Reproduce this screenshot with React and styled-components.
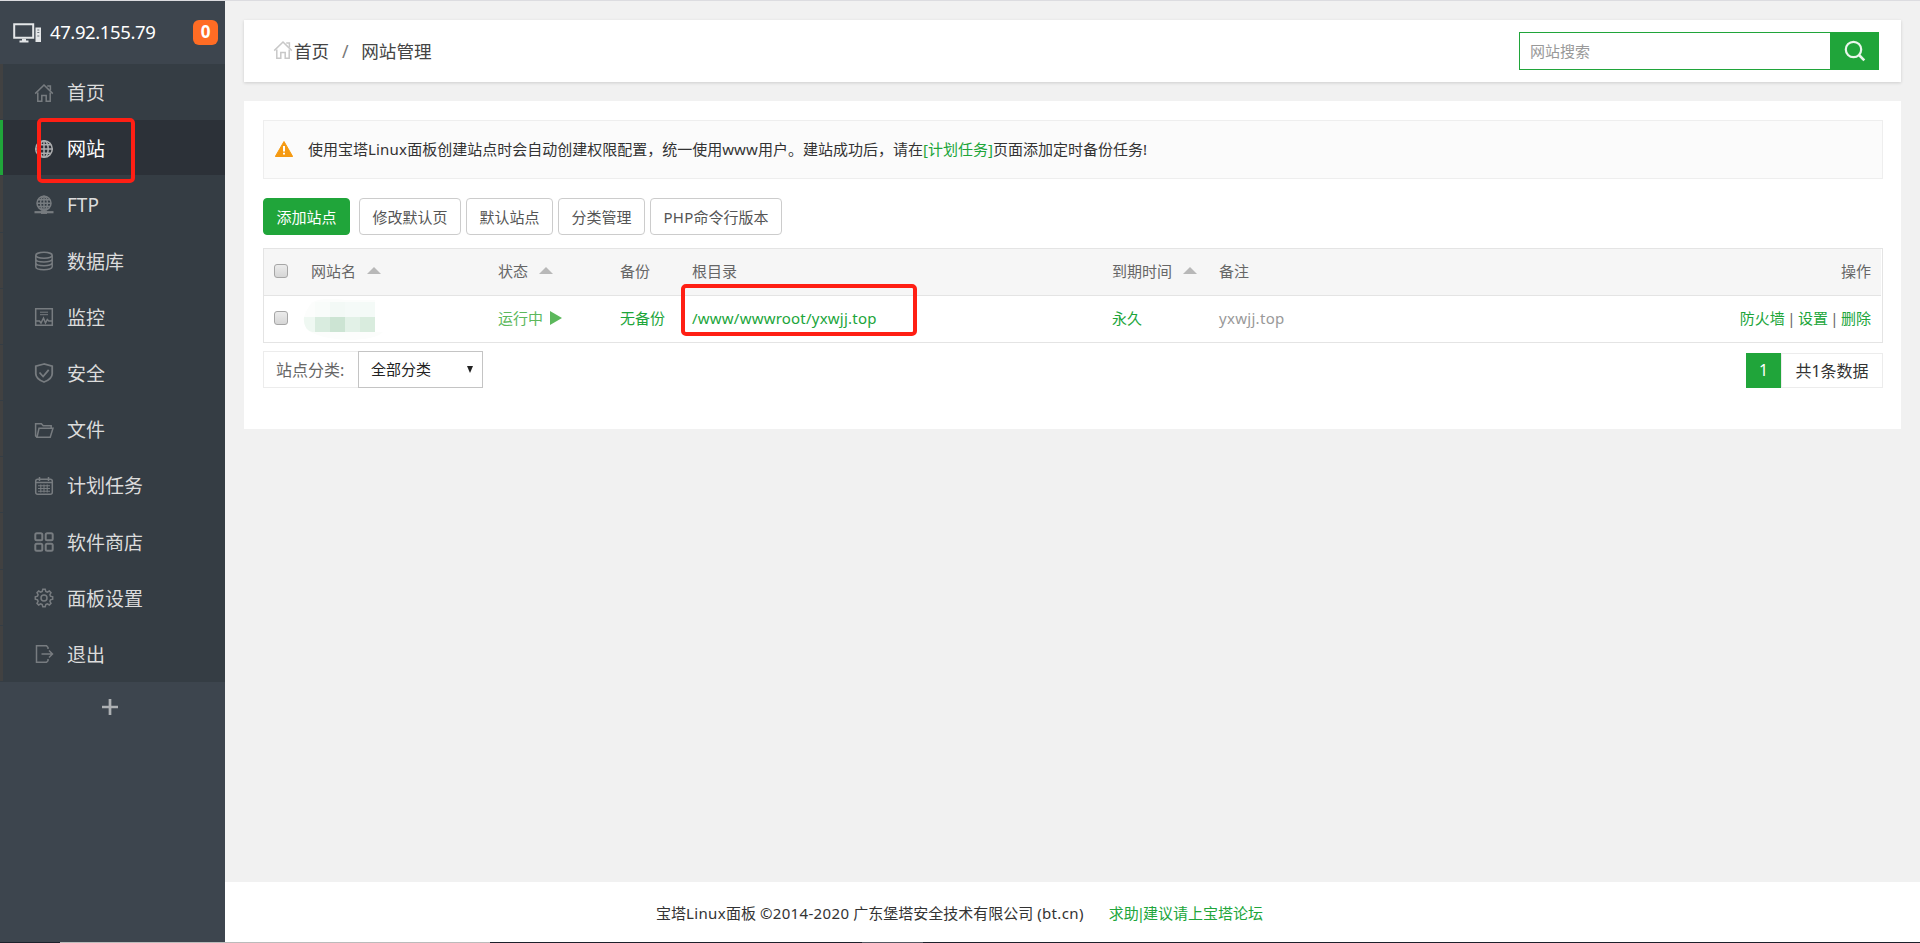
import React from "react";
import styled, { createGlobalStyle, css } from "styled-components";

const GlobalStyle = createGlobalStyle`
  * { box-sizing: border-box; }
  body {
    margin: 0;
    background: #f1f1f1;
    color: #333;
    font: 15px/20px "Noto Sans", "Noto Sans CJK SC", sans-serif;
  }
`;

const green = "#20a53a";

const Page = styled.div`
  position: relative;
  width: 1920px;
  height: 943px;
  overflow: hidden;
  display: flex;
  flex-direction: column;
  border-top: 1px solid #dcdce0;
`;
const Body = styled.div`
  flex: 1;
  display: flex;
  min-height: 0;
`;

/* Sidebar */
const Sidebar = styled.aside`
  width: 225px;
  background: #3d454e;
  display: flex;
  flex-direction: column;
`;
const Host = styled.div`
  height: 63px;
  padding: 0 7px 0 13px;
  display: flex;
  align-items: center;
  color: #fff;
`;
const HostName = styled.span`
  flex: 1;
  padding: 0 0 2px 8px;
  font-size: 18.5px;
  letter-spacing: -0.4px;
`;
const Badge = styled.span`
  width: 25px;
  height: 25px;
  border-radius: 6px;
  background: #ff6c24;
  font-weight: 700;
  font-size: 17px;
  line-height: 24px;
  text-align: center;
`;
const Menu = styled.nav`
  height: 618px;
  display: grid;
  grid-template-rows: repeat(11, 1fr);
  background: #353d44;
`;
const MenuItem = styled.a`
  display: flex;
  align-items: center;
  gap: 13px;
  margin-bottom: 1px;
  padding: 3px 0 0 31px;
  border-left: 3px solid #414141;
  color: #dcdcdc;
  font-size: 19px;
  svg { opacity: 0.44; margin-top: -1px; }
  ${(p) =>
    p.$active &&
    css`
      background: #2c3138;
      border-left-color: ${green};
      color: #fff;
      svg { opacity: 0.8; }
    `}
`;
const AddMenu = styled.div`
  display: flex;
  justify-content: center;
  padding: 16px 5px 0 0;
`;

/* Main column */
const Main = styled.main`
  flex: 1;
  display: flex;
  flex-direction: column;
`;
const Crumbs = styled.header`
  margin: 19px 19px 0;
  height: 62px;
  padding: 0 22px 0 29px;
  background: #fff;
  box-shadow: 0 1px 3px rgba(0, 0, 0, 0.15);
  display: flex;
  align-items: center;
  color: #444;
  font-size: 17.6px;
  > svg { margin: -2px 0 0 0; }
`;
const CrumbTrail = styled.div`
  display: flex;
  padding-left: 1px;
`;
const Slash = styled.span`
  width: 32px;
  text-align: center;
  color: #777;
`;
const Search = styled.form`
  margin-left: auto;
  display: flex;
  height: 38px;
`;
const SearchInput = styled.input`
  width: 311px;
  padding: 0 10px;
  border: 1px solid ${green};
  border-right: 0;
  outline: 0;
  font: inherit;
  font-size: 15px;
  &::placeholder { color: #999; opacity: 1; }
`;
const SearchButton = styled.button`
  width: 49px;
  padding: 0;
  border: 0;
  background: ${green};
  display: flex;
  align-items: center;
  justify-content: center;
`;
const Card = styled.section`
  margin: 19px 19px 0;
  height: 328px;
  padding: 19px 18px 0 19px;
  background: #fff;
`;
const Notice = styled.div`
  height: 59px;
  padding: 0 11px 2px;
  border: 1px solid #eee;
  background: #fbfbfb;
  display: flex;
  align-items: center;
  gap: 15px;
`;
const Latin = styled.span`
  letter-spacing: ${(p) => p.$track || 0.18}px;
`;
const Link = styled.a`
  color: ${green};
`;
const Pipe = styled.span`
  margin: 0 ${(p) => p.$pull}px;
  &::before { content: "|"; }
`;
const Toolbar = styled.div`
  display: flex;
  gap: 5px;
  margin-top: 19px;
`;
const Button = styled.button`
  height: 37px;
  width: ${(p) => p.$width}px;
  padding: 0;
  border: 1px solid ${(p) => (p.$primary ? green : "#ccc")};
  border-radius: 4px;
  margin-right: ${(p) => (p.$primary ? 4 : 0)}px;
  background: ${(p) => (p.$primary ? green : "#fff")};
  color: ${(p) => (p.$primary ? "#fff" : "#555")};
  font: inherit;
  white-space: nowrap;
`;
const Table = styled.div`
  margin-top: 13px;
  border: 1px solid #e4e4e4;
`;
const Row = styled.div`
  display: grid;
  grid-template-columns: 37px 187px 122px 72px 420px 107px 1fr auto;
  align-items: center;
  height: ${(p) => (p.$head ? 47 : 46)}px;
  padding: 0 11px 2px 10px;
  color: #666;
  ${(p) =>
    p.$head &&
    css`
      margin-right: 1px;
      padding-right: 10px;
      border-bottom: 1px solid #e4e4e4;
      background: #f6f6f6;
    `}
`;
const Cell = styled.div`
  display: flex;
  align-items: center;
  color: ${(p) => p.$color || "inherit"};
`;
const Actions = styled.div`
  white-space: nowrap;
`;
const Caret = styled.i`
  margin-left: 11px;
  border: 7px solid transparent;
  border-top: 0;
  border-bottom-color: #b8b8b8;
  margin-top: -1px;
`;
const Play = styled.i`
  margin-left: 7px;
  border: 7px solid transparent;
  border-right: 0;
  border-left: 12px solid #5cb85c;
`;
const Check = styled.input`
  appearance: none;
  width: 14px;
  height: 14px;
  margin: 0;
  border: 1px solid #a6a6a6;
  border-radius: 3px;
  background: linear-gradient(#ebebeb, #d6d6d6);
`;
const Mosaic = styled.svg`
  margin: 1px 0 -3px -8px;
`;
const TableFoot = styled.div`
  display: flex;
  justify-content: space-between;
  margin-top: 8px;
`;
const Filter = styled.div`
  display: flex;
  height: 37px;
`;
const FilterLabel = styled.label`
  width: 95px;
  padding-left: 12px;
  border: 1px solid #ececec;
  border-right: 0;
  color: #666;
  font-size: 16px;
  line-height: 37px;
`;
const Select = styled.div`
  width: 125px;
  padding: 0 9px 1px 12px;
  border: 1px solid #c4c4c4;
  display: flex;
  align-items: center;
  justify-content: space-between;
  color: #222;
`;
const DownArrow = styled.i`
  border: 3.5px solid transparent;
  border-bottom: 0;
  border-top: 7px solid #222;
`;
const Pager = styled.div`
  display: flex;
  height: 35px;
  margin-top: 2px;
  font-size: 16px;
  line-height: 35px;
`;
const Current = styled.span`
  width: 35px;
  background: ${green};
  color: #fff;
  text-align: center;
`;
const Total = styled.span`
  width: 102px;
  border: 1px solid #ececec;
  text-align: center;
`;
const Footer = styled.footer`
  margin-top: auto;
  height: 60px;
  padding: 1px 0 0 431px;
  background: #fff;
  display: flex;
  align-items: center;
  gap: 25px;
  white-space: nowrap;
`;
const BottomEdge = styled.div`
  height: 1px;
  background: linear-gradient(
    90deg,
    #1d202b 60px, #bbb 60px, #bbb 490px, #1d202b 490px,
    #1d202b 862px, #555862 862px, #555862 923px, #1d202b 923px
  );
`;
const Marker = styled.div`
  position: absolute;
  left: ${(p) => p.$x}px;
  top: ${(p) => p.$y}px;
  width: ${(p) => p.$w}px;
  height: ${(p) => p.$h}px;
  border: 4px solid #ff1f14;
  border-radius: 5px;
`;

const Icon = ({ children, size = 20, color = "#ccc", width = 1.5 }) => (
  <svg width={size} height={size} viewBox="0 0 20 20" fill="none" stroke={color} strokeWidth={width}>
    {children}
  </svg>
);

const house = (
  <>
    <path d="M1.2 10.6 10 2l8.8 8.6" />
    <path d="M3.8 9.5v8.7h4v-5.6h4.4v5.6h4V9.5M13.2 3h3.2v4.5" />
  </>
);
const globe = (
  <>
    <circle cx="10" cy="10" r="8.3" />
    <ellipse cx="10" cy="10" rx="4.2" ry="8.3" />
    <path d="M10 1.7v16.6M1.7 10h16.6M3.2 5.8h13.6M3.2 14.2h13.6" />
  </>
);
const icons = {
  house,
  globe,
  ftp: (
    <>
      <circle cx="10" cy="8.2" r="7" />
      <ellipse cx="10" cy="8.2" rx="3.4" ry="7" />
      <path d="M10 1.2v14M3 8.2h14M4 4.8h12M4 11.6h12" />
      <path d="M.5 17.2h19" strokeWidth="2.2" />
      <path d="M7 17.2h6" strokeWidth="3.5" />
    </>
  ),
  data: (
    <>
      <ellipse cx="10" cy="4.3" rx="8.2" ry="3" />
      <path d="M1.8 4.3v11.4c0 4 16.4 4 16.4 0V4.3M1.8 8c0 4 16.4 4 16.4 0M1.8 11.8c0 4 16.4 4 16.4 0" />
    </>
  ),
  monitor: (
    <>
      <path d="M1.7 1.7h16.6v16.6H1.7z" />
      <path d="M6 5.2h8M6 7.7h8" strokeWidth="1" />
      <path d="M2 14h3.5l1.5 2 2.5-5 2 5 1.8-3.5 1.5 1.5H18" />
    </>
  ),
  shield: (
    <path
      strokeWidth="1.8"
      d="M10 1 1.8 3.2v7.5c0 3.5 3.8 6.6 8.2 8.3 4.4-1.7 8.2-4.8 8.2-8.3V3.2zM5.5 9.5l3.6 4 5.6-6.7"
    />
  ),
  folder: <path d="M3 17.3 1.6 16V3.8h5.8l1.8 2h8v2.4M3 17.3h13.2l2.8-9H5z" />,
  calendar: (
    <>
      <rect x="1.7" y="3.2" width="16.6" height="15" rx="2" />
      <path d="M1.7 6.5h16.6M5.5 1v4M14.5 1v4" />
      <path d="M4 9.7h12M4 12.5h12M4 15.3h12M6.8 8.5v8M10 8.5v8M13.2 8.5v8" strokeWidth="1.1" />
    </>
  ),
  apps: (
    <g strokeWidth="2">
      <rect x="1.3" y="1.3" width="7" height="7" rx="1.5" />
      <rect x="11.7" y="1.3" width="7" height="7" rx="1.5" />
      <rect x="1.3" y="11.7" width="7" height="7" rx="1.5" />
      <rect x="11.7" y="11.7" width="7" height="7" rx="1.5" />
    </g>
  ),
  gear: (
    <>
      <path d="m8.2 3.5.6-2.2h2.4l.6 2.2 1.5.6 2-1.1 1.7 1.7-1.1 2 .6 1.5 2.2.6v2.4l-2.2.6-.6 1.5 1.1 2-1.7 1.7-2-1.1-1.5.6-.6 2.2H8.8l-.6-2.2-1.5-.6-2 1.1L3 15.3l1.1-2-.6-1.5-2.2-.6V8.8l2.2-.6.6-1.5-1.1-2L4.7 3l2 1.1z" />
      <circle cx="10" cy="10" r="3" />
    </>
  ),
  exit: <path d="M14 5V3.5L12.5 1.8H2.5V18.2h10L14 16.7V15M7.5 10h11M15 6.5l3.5 3.5-3.5 3.5" />,
};

const menu = [
  ["house", "首页"],
  ["globe", "网站"],
  ["ftp", "FTP"],
  ["data", "数据库"],
  ["monitor", "监控"],
  ["shield", "安全"],
  ["folder", "文件"],
  ["calendar", "计划任务"],
  ["apps", "软件商店"],
  ["gear", "面板设置"],
  ["exit", "退出"],
];

const mosaicCells = [
  [12, 3, "#f9fcfa"], [27, 3, "#f3f9f6"], [42, 3, "#f5faf8"], [57, 3, "#f4faf7"],
  [0, 18, "#eff8f2"], [12, 18, "#d9ecdf"], [27, 18, "#cce4d3"], [42, 18, "#e2f1e7"], [57, 18, "#d9ecde"],
];

export default function App() {
  return (
    <Page>
      <GlobalStyle />
      <Body>
        <Sidebar>
          <Host>
            <svg width="29" height="20" viewBox="0 0 29 20" fill="none" stroke="#e4e6e8">
              <path d="M1.2 1.2h19v13.6h-19z" strokeWidth="2" />
              <path d="M6.5 18.5h9M9 16.8h4" strokeWidth="2" />
              <path d="M22.5 4.5h5.5v14.5h-5.5z" fill="#e4e6e8" stroke="none" />
              <path d="M24.3 7h2M24.3 9.5h2M24.3 13h2" stroke="#6b737b" />
            </svg>
            <HostName>47.92.155.79</HostName>
            <Badge>0</Badge>
          </Host>
          <Menu>
            {menu.map(([icon, label]) => (
              <MenuItem key={label} $active={icon === "globe"}>
                <Icon>{icons[icon]}</Icon>
                {label}
              </MenuItem>
            ))}
          </Menu>
          <AddMenu>
            <svg width="18" height="18" viewBox="0 0 18 18" stroke="#adb0b3" strokeWidth="2.7">
              <path d="M9 1v16M1 9h16" />
            </svg>
          </AddMenu>
        </Sidebar>
        <Main>
          <Crumbs>
            <Icon color="#c8c8c8">{house}</Icon>
            <CrumbTrail>
              首页<Slash>/</Slash>网站管理
            </CrumbTrail>
            <Search>
              <SearchInput placeholder="网站搜索" />
              <SearchButton type="button">
                <svg width="22" height="22" viewBox="0 0 22 22" fill="none" stroke="#e9f6eb" strokeWidth="2.2">
                  <circle cx="9.5" cy="9.5" r="7.7" />
                  <path d="m15 15 5.3 5.3" strokeWidth="2.6" />
                </svg>
              </SearchButton>
            </Search>
          </Crumbs>
          <Card>
            <Notice>
              <svg width="18" height="16" viewBox="0 0 18 16">
                <path d="M9 .5 17.7 15.5H.3z" fill="#f59a12" stroke="#f59a12" strokeLinejoin="round" />
                <path d="M9 5v5.5M9 11.7v1.8" stroke="#fff" strokeWidth="2" />
              </svg>
              <span>
                使用宝塔<Latin>Linux</Latin>面板创建站点时会自动创建权限配置，统一使用<Latin>www</Latin>用户。建站成功后，请在
                <Link>[计划任务]</Link>页面添加定时备份任务!
              </span>
            </Notice>
            <Toolbar>
              <Button $primary $width={87}>添加站点</Button>
              <Button $width={102}>修改默认页</Button>
              <Button $width={87}>默认站点</Button>
              <Button $width={87}>分类管理</Button>
              <Button $width={132}><Latin>PHP</Latin>命令行版本</Button>
            </Toolbar>
            <Table>
              <Row $head>
                <Check type="checkbox" />
                <Cell>网站名<Caret /></Cell>
                <Cell>状态<Caret /></Cell>
                <Cell>备份</Cell>
                <Cell>根目录</Cell>
                <Cell>到期时间<Caret /></Cell>
                <Cell>备注</Cell>
                <Cell>操作</Cell>
              </Row>
              <Row>
                <Check type="checkbox" />
                <Cell>
                  <Mosaic width="82" height="42" viewBox="0 0 82 42">
                    <path d="M10 3C18-1 34 0 42 1h30v32h8c-8 10-50 10-68 2C2 31 0 24 1 18 3 12 6 6 10 3z" fill="#fcfdfc" />
                    <clipPath id="blob"><path d="M10 3h62v30H9C3 32 0 24 1 18z" /></clipPath>
                    <g clipPath="url(#blob)">
                      {mosaicCells.map(([x, y, fill]) => (
                        <rect key={`${x}-${y}`} x={x} y={y} width={x ? 15 : 12} height="15" fill={fill} />
                      ))}
                    </g>
                  </Mosaic>
                </Cell>
                <Cell $color="#5cb85c">运行中<Play /></Cell>
                <Cell $color={green}>无备份</Cell>
                <Cell $color={green}><Latin $track={0.22}>/www/wwwroot/yxwjj.top</Latin></Cell>
                <Cell $color={green}>永久</Cell>
                <Cell $color="#999"><Latin $track={0.3}>yxwjj.top</Latin></Cell>
                <Actions>
                  <Link>防火墙</Link> <Pipe $pull={-1.5} /> <Link>设置</Link> <Pipe $pull={-1.5} /> <Link>删除</Link>
                </Actions>
              </Row>
            </Table>
            <TableFoot>
              <Filter>
                <FilterLabel>站点分类:</FilterLabel>
                <Select>全部分类<DownArrow /></Select>
              </Filter>
              <Pager>
                <Current>1</Current>
                <Total>共1条数据</Total>
              </Pager>
            </TableFoot>
          </Card>
          <Footer>
            <span>
              宝塔<Latin $track={0.35}>Linux</Latin>面板 <Latin $track={0.35}>©2014-2020</Latin> 广东堡塔安全技术有限公司 <Latin $track={0.35}>(bt.cn)</Latin>
            </span>
            <Link>求助<Pipe $pull={-2} />建议请上宝塔论坛</Link>
          </Footer>
        </Main>
      </Body>
      <BottomEdge />
      <Marker $x={37} $y={117} $w={98} $h={65} />
      <Marker $x={681} $y={283} $w={236} $h={52} />
    </Page>
  );
}
